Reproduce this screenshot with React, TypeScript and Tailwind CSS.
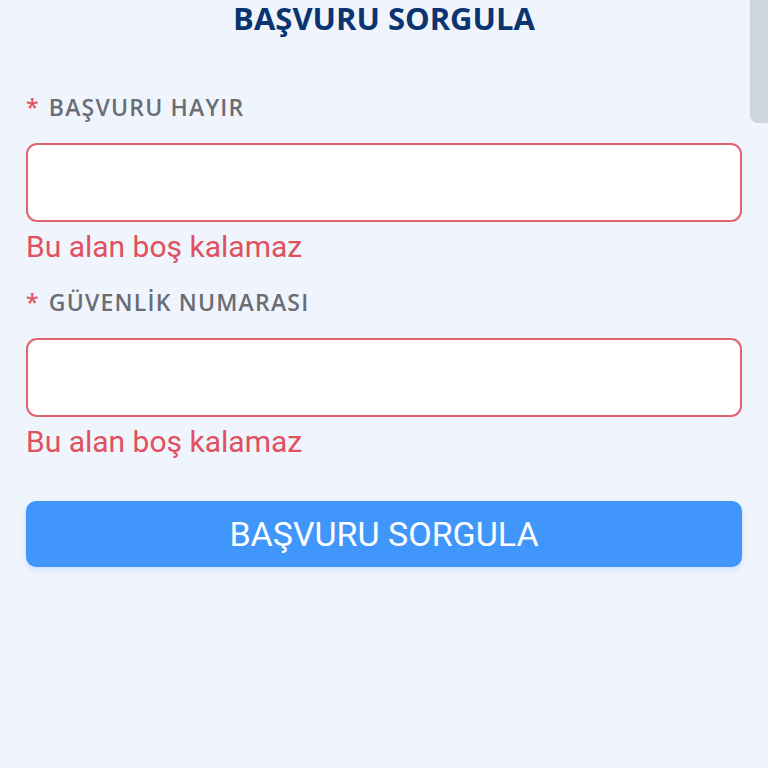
export default function App() {
  const fields = ["BAŞVURU HAYIR", "GÜVENLİK NUMARASI"];

  return (
    <div className="relative min-h-[768px] w-full overflow-hidden bg-[#f0f5fd]">
      {/* scrollbar thumb */}
      <div className="absolute right-0 top-0 h-[123px] w-[18px] rounded-bl-[8px] rounded-br-[2px] bg-[#cfd5de]" />

      <div className="px-[26px]">
        <h1 className="pt-[1px] text-center font-['Open_Sans',sans-serif] text-[31px] font-bold leading-[35px] text-[#0b3570]">
          BAŞVURU SORGULA
        </h1>

        <div className="mt-[56px] flex flex-col">
          {fields.map((label, i) => (
            <div key={label} className={i > 0 ? "mt-[22px]" : ""}>
              <div className="flex items-center font-['Open_Sans',sans-serif] text-[23px] font-semibold leading-[30px] tracking-[1.2px] text-[#6a6d73]">
                <span className="mr-[9px] text-[#e35566]">*</span>
                <span>{label}</span>
              </div>
              <input
                type="text"
                className="mt-[21px] block h-[79px] w-full rounded-[11px] border-2 border-[#e0646f] bg-white px-4 outline-none"
              />
              <p className="mt-[7px] font-['Roboto',sans-serif] text-[30px] leading-[36px] text-[#e0505f]">
                Bu alan boş kalamaz
              </p>
            </div>
          ))}
        </div>

        <button
          type="button"
          className="mt-[41px] flex h-[66px] w-full items-center justify-center rounded-[10px] bg-[#4196fc] font-['Roboto',sans-serif] text-[34px] text-white shadow-[0_3px_6px_rgba(65,150,252,0.2)]"
        >
          BAŞVURU SORGULA
        </button>
      </div>
    </div>
  );
}
